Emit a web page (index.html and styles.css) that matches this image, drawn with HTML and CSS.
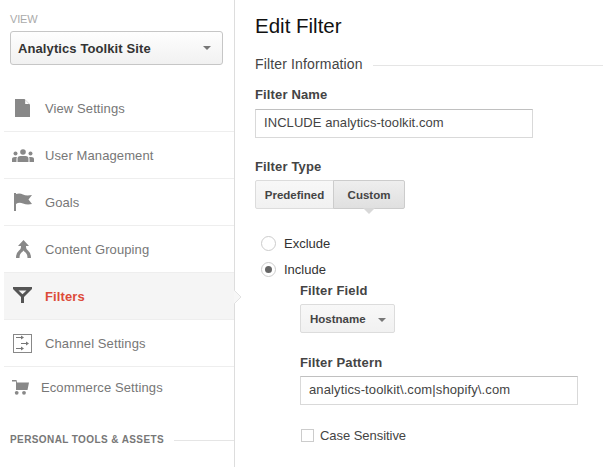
FILE: index.html
```html
<!DOCTYPE html>
<html lang="en">
<head>
<meta charset="utf-8">
<title>Edit Filter</title>
<link rel="stylesheet" href="styles.css">
</head>
<body>
<div class="app">
  <aside class="sidebar">
    <div class="view-label">VIEW</div>
    <div class="view-select"><span>Analytics Toolkit Site</span><i class="caret"></i></div>
    <nav class="nav">
      <a class="row"><span class="ico ico-page"><svg width="15" height="18" viewBox="0 0 15 18"><path d="M0 0H9.500L15 5.500V18H0Z" fill="#888"/><path d="M10.200 0.800L14.200 5H10.200Z" fill="#fff"/></svg></span>View Settings</a>
      <a class="row"><span class="ico ico-user"><svg width="22" height="13" viewBox="0 0 22 13"><circle cx="3.500" cy="4.500" r="2" fill="#888"/><circle cx="11" cy="3" r="2.800" fill="#888"/><circle cx="18.500" cy="4.500" r="2" fill="#888"/><path d="M5.500 13V9.500Q5.500 7 8.500 7H13.500Q16.500 7 16.500 9.500V13ZM0 13V10Q0 8 3 8H5Q4.500 8.500 4.500 10V13ZM22 13V10Q22 8 19 8H17Q17.500 8.500 17.500 10V13Z" fill="#888"/></svg></span>User Management</a>
      <a class="row"><span class="ico ico-flag"><svg width="18" height="18" viewBox="0 0 18 18"><path d="M0 0H2V18H0Z" fill="#888"/><path d="M2 1Q6 0 9 1.500T18 2L14.500 6.500L18 11Q13 12 9 10.500T2 11Z" fill="#888"/></svg></span>Goals</a>
      <a class="row"><span class="ico ico-group"><svg width="15" height="18" viewBox="0 0 15 18"><path d="M7.500 0L13 6H10V7Q10 9 12 10.500Q15 13 15 18H11.500Q11.500 14 9.500 12.500Q8 11.500 7.500 10.500Q7 11.500 5.500 12.500Q3.500 14 3.500 18H0Q0 13 3 10.500Q5 9 5 7V6H2Z" fill="#888"/></svg></span>Content Grouping</a>
      <a class="row active"><span class="ico ico-filter"><svg width="19" height="16" viewBox="0 0 19 16"><path d="M0 0H19V2L11 10V16H8V10L0 2Z" fill="#555"/><path d="M5.500 3.500H13.500L9.500 7.200Z" fill="#f5f5f5"/></svg></span>Filters</a>
      <a class="row"><span class="ico ico-channel"><svg width="19" height="19" viewBox="0 0 19 19"><rect x="0.500" y="0.500" width="18" height="18" fill="none" stroke="#888"/><path d="M3 3H8V1.500L11 3.500L8 5.500V4H3ZM8 9H13V7.500L16 9.500L13 11.500V10H8ZM3 14H8V12.500L11 14.500L8 16.500V15H3Z" fill="#777"/></svg></span>Channel Settings</a>
      <a class="row row-last"><span class="ico ico-cart"><svg width="17" height="15" viewBox="0 0 17 15"><path d="M0 0H4.500L5 2.500H17L15.500 10H4V1.500H0Z" fill="#888"/><circle cx="4.700" cy="12.800" r="1.900" fill="#888"/><circle cx="12" cy="12.800" r="1.900" fill="#888"/></svg></span>Ecommerce Settings</a>
    </nav>
    <div class="section-head"><span>PERSONAL TOOLS &amp; ASSETS</span><i class="rule"></i></div>
  </aside>
  <div class="pointer"><svg width="8" height="14" viewBox="0 0 8 14"><path d="M0 0L7 7L0 14Z" fill="#f7f7f7"/><path d="M0 0L7 7L0 14" fill="none" stroke="#e2e2e2"/></svg></div>
  <main class="main">
    <h1 class="title">Edit Filter</h1>
    <div class="info-head"><span>Filter Information</span><i class="rule"></i></div>
    <label class="field-label">Filter Name</label>
    <div class="input input-name">INCLUDE analytics-toolkit.com</div>
    <label class="field-label label-type">Filter Type</label>
    <div class="toggle">
      <span class="seg">Predefined</span>
      <span class="seg seg-on">Custom</span>
    </div>
    <div class="options">
      <div class="radio-row"><i class="radio"></i>Exclude</div>
      <div class="radio-row"><i class="radio radio-on"></i>Include</div>
      <div class="sub">
        <label class="field-label">Filter Field</label>
        <div class="dropdown">Hostname<i class="caret"></i></div>
        <label class="field-label label-pattern">Filter Pattern</label>
        <div class="input input-pattern">analytics-toolkit\.com|shopify\.com</div>
        <div class="check-row"><i class="check"></i>Case Sensitive</div>
      </div>
    </div>
  </main>
</div>
</body>
</html>
```
FILE: styles.css
```css
* { box-sizing: border-box; }
html, body { margin: 0; height: 467px; overflow: hidden; background: #fff; }
body { font-family: "Liberation Sans", Arial, sans-serif; font-size: 13px; color: #444; }
.app { display: flex; height: 467px; position: relative; }
.sidebar { width: 235px; flex: none; border-right: 1px solid #ddd; padding: 12px 0 0 4px; }
.view-label { font-size: 11px; line-height: 14px; color: #aaa; padding-left: 6px; letter-spacing: -0.2px; }
.view-select { margin: 5px 11px 0 6px; height: 34px; border: 1px solid #c6c6c6; border-radius: 3px; background: linear-gradient(#fefefe, #f1f1f1); display: flex; align-items: center; justify-content: space-between; padding: 0 11px 0 7px; font-weight: bold; font-size: 13px; letter-spacing: 0.1px; color: #333; }
.caret { display: block; width: 0; height: 0; border-left: 4px solid transparent; border-right: 4px solid transparent; border-top: 4px solid #777; }
.nav { margin-top: 20px; }
.row { display: flex; align-items: center; height: 47px; border-bottom: 1px solid #eee; color: #777; font-size: 13px; letter-spacing: 0.1px; }
.row.active { background: #f5f5f5; color: #dd4b39; font-weight: bold; }
.ico { width: 41px; display: flex; justify-content: flex-start; padding-left: 9px; }
.ico svg { display: block; }
.ico-page { padding-left: 11px; }
.ico-user { padding-left: 8px; }
.ico-flag { padding-left: 10px; }
.ico-group { padding-left: 12px; }
.ico-filter { margin-top: -2px; }
.ico-cart { width: 37px; padding-left: 8px; }
.row-last { border-bottom: 0; height: 41px; }
.section-head { display: flex; align-items: center; margin-top: 26px; padding-left: 6px; font-size: 10px; font-weight: bold; color: #777; letter-spacing: 0.4px; }
.rule { display: block; flex: 1; height: 1px; background: #e5e5e5; margin-left: 10px; }
.section-head .rule { margin-top: 1px; }
.pointer { position: absolute; left: 234px; top: 290px; width: 8px; height: 14px; }
.pointer svg { display: block; }
.main { flex: 1; padding: 14px 0 0 20px; min-width: 0; }
.title { margin: 0; font-size: 20.500px; line-height: 23px; font-weight: normal; color: #111; }
.info-head { display: flex; align-items: center; margin-top: 18px; font-size: 14px; letter-spacing: 0.15px; line-height: 18px; color: #444; }
.info-head .rule { margin-left: 10px; margin-top: 3px; }
.field-label { display: block; font-weight: bold; font-size: 13px; letter-spacing: 0.15px; line-height: 16px; color: #444; }
.info-head + .field-label { margin-top: 14px; }
.input { height: 29px; border: 1px solid #d9d9d9; border-top-color: #c0c0c0; padding: 0 8px; line-height: 26px; font-size: 13px; letter-spacing: 0.07px; color: #444; }
.input-name { width: 278px; margin-top: 6px; }
.label-type { margin-top: 21px; }
.toggle { display: flex; margin-top: 5px; width: 150px; height: 29px; }
.seg { height: 29px; display: flex; align-items: center; justify-content: center; border: 1px solid #dcdcdc; font-size: 11.500px; font-weight: bold; color: #444; background: linear-gradient(#f8f8f8, #f1f1f1); width: 79px; border-radius: 2px 0 0 2px; }
.seg-on { width: 72px; margin-left: -1px; border-color: #ccc; background: linear-gradient(#eee, #e0e0e0); border-radius: 0 2px 2px 0; position: relative; }
.seg-on::after { content: ""; position: absolute; left: 29px; top: 27px; border-left: 6px solid transparent; border-right: 6px solid transparent; border-top: 6px solid #d8d8d8; }
.options { margin-top: 21px; padding-left: 6px; }
.radio-row { display: flex; align-items: center; height: 26px; font-size: 13px; color: #333; }
.radio { width: 15px; height: 15px; border-radius: 50%; border: 1px solid #ccc; background: #fff; margin-right: 8px; display: flex; align-items: center; justify-content: center; }
.radio-on::after { content: ""; width: 7px; height: 7px; border-radius: 50%; background: #666; }
.sub { padding-left: 39px; margin-top: 1px; }
.dropdown { margin-top: 5px; width: 95px; height: 29px; border: 1px solid #dcdcdc; background: linear-gradient(#f8f8f8, #f1f1f1); border-radius: 2px; display: flex; align-items: center; justify-content: space-between; padding: 0 8px 0 9px; font-size: 11.500px; font-weight: bold; color: #444; }
.dropdown .caret { margin-top: 3px; }
.label-pattern { margin-top: 22px; }
.input-pattern { width: 278px; margin-top: 5px; letter-spacing: 0.12px; }
.check-row { display: flex; align-items: center; margin-top: 23px; font-size: 13px; letter-spacing: -0.05px; color: #444; }
.check { width: 13px; height: 13px; border: 1px solid #ccc; margin-right: 6px; margin-left: 1px; }
```
